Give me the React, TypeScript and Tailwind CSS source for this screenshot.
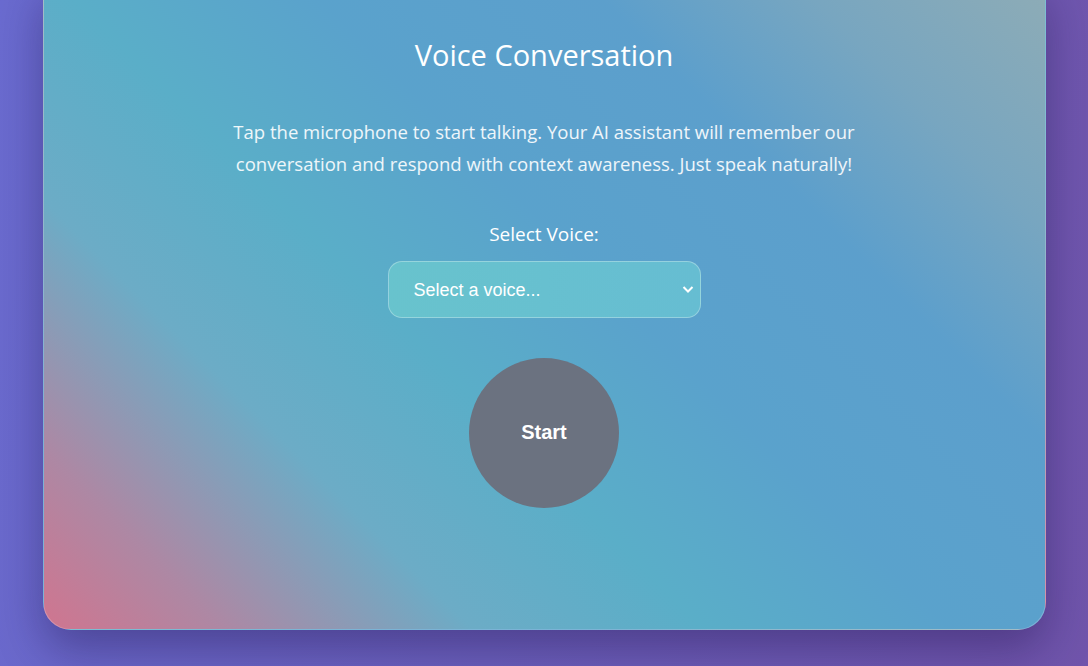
import React from "react";

export default function App() {
  return (
    <div className="min-h-screen w-full overflow-hidden bg-[linear-gradient(100deg,#6a6bd0_0%,#6c60bd_50%,#7054ab_100%)]">
      <div className="mx-auto -mt-[20px] w-[1003px] rounded-b-[28px] border border-white/20 bg-[linear-gradient(45deg,#d0758f_0%,#ad88a4_11%,#6cacc6_26%,#5aaec8_40%,#5aa2cc_55%,#5c9fcc_72%,#78a6c0_85%,#8eacb6_100%)] px-10 pt-[57px] pb-[121px] text-center shadow-[0_20px_45px_rgba(20,10,60,0.35)]">
        <h1 className="text-[29px] leading-[34px] text-white font-['Open_Sans',sans-serif] font-normal">
          Voice Conversation
        </h1>
        <p className="mx-auto mt-[44px] max-w-[680px] text-[18.5px] leading-[32px] text-white/90 font-['Open_Sans',sans-serif]">
          Tap the microphone to start talking. Your AI assistant will remember our conversation and respond with context awareness. Just speak naturally!
        </p>
        <div className="mt-[42px] text-[19px] leading-[24px] text-white font-medium font-['Open_Sans',sans-serif]">
          Select Voice:
        </div>
        <div className="relative mx-auto mt-[15px] h-[57px] w-[313px]">
          <select
            className="h-full w-full appearance-none rounded-[14px] border border-white/30 bg-[linear-gradient(90deg,#68c3cd,#66bdd2)] pl-[25px] pr-10 pt-[2px] text-[18px] text-white outline-none font-['Liberation_Sans',Arial,sans-serif]"
            defaultValue=""
          >
            <option value="">Select a voice...</option>
          </select>
          <svg
            className="pointer-events-none absolute right-[7px] top-[24px]"
            width="12"
            height="9"
            viewBox="0 0 12 9"
          >
            <path d="M1.5 2 L6 6.5 L10.5 2" fill="none" stroke="white" strokeWidth="2" />
          </svg>
        </div>
        <button className="mx-auto mt-[40px] flex h-[150px] w-[150px] items-center justify-center rounded-full bg-[#6b7280] pb-[2px] text-[20px] font-bold text-white font-['Liberation_Sans',Arial,sans-serif]">
          Start
        </button>
      </div>
    </div>
  );
}
